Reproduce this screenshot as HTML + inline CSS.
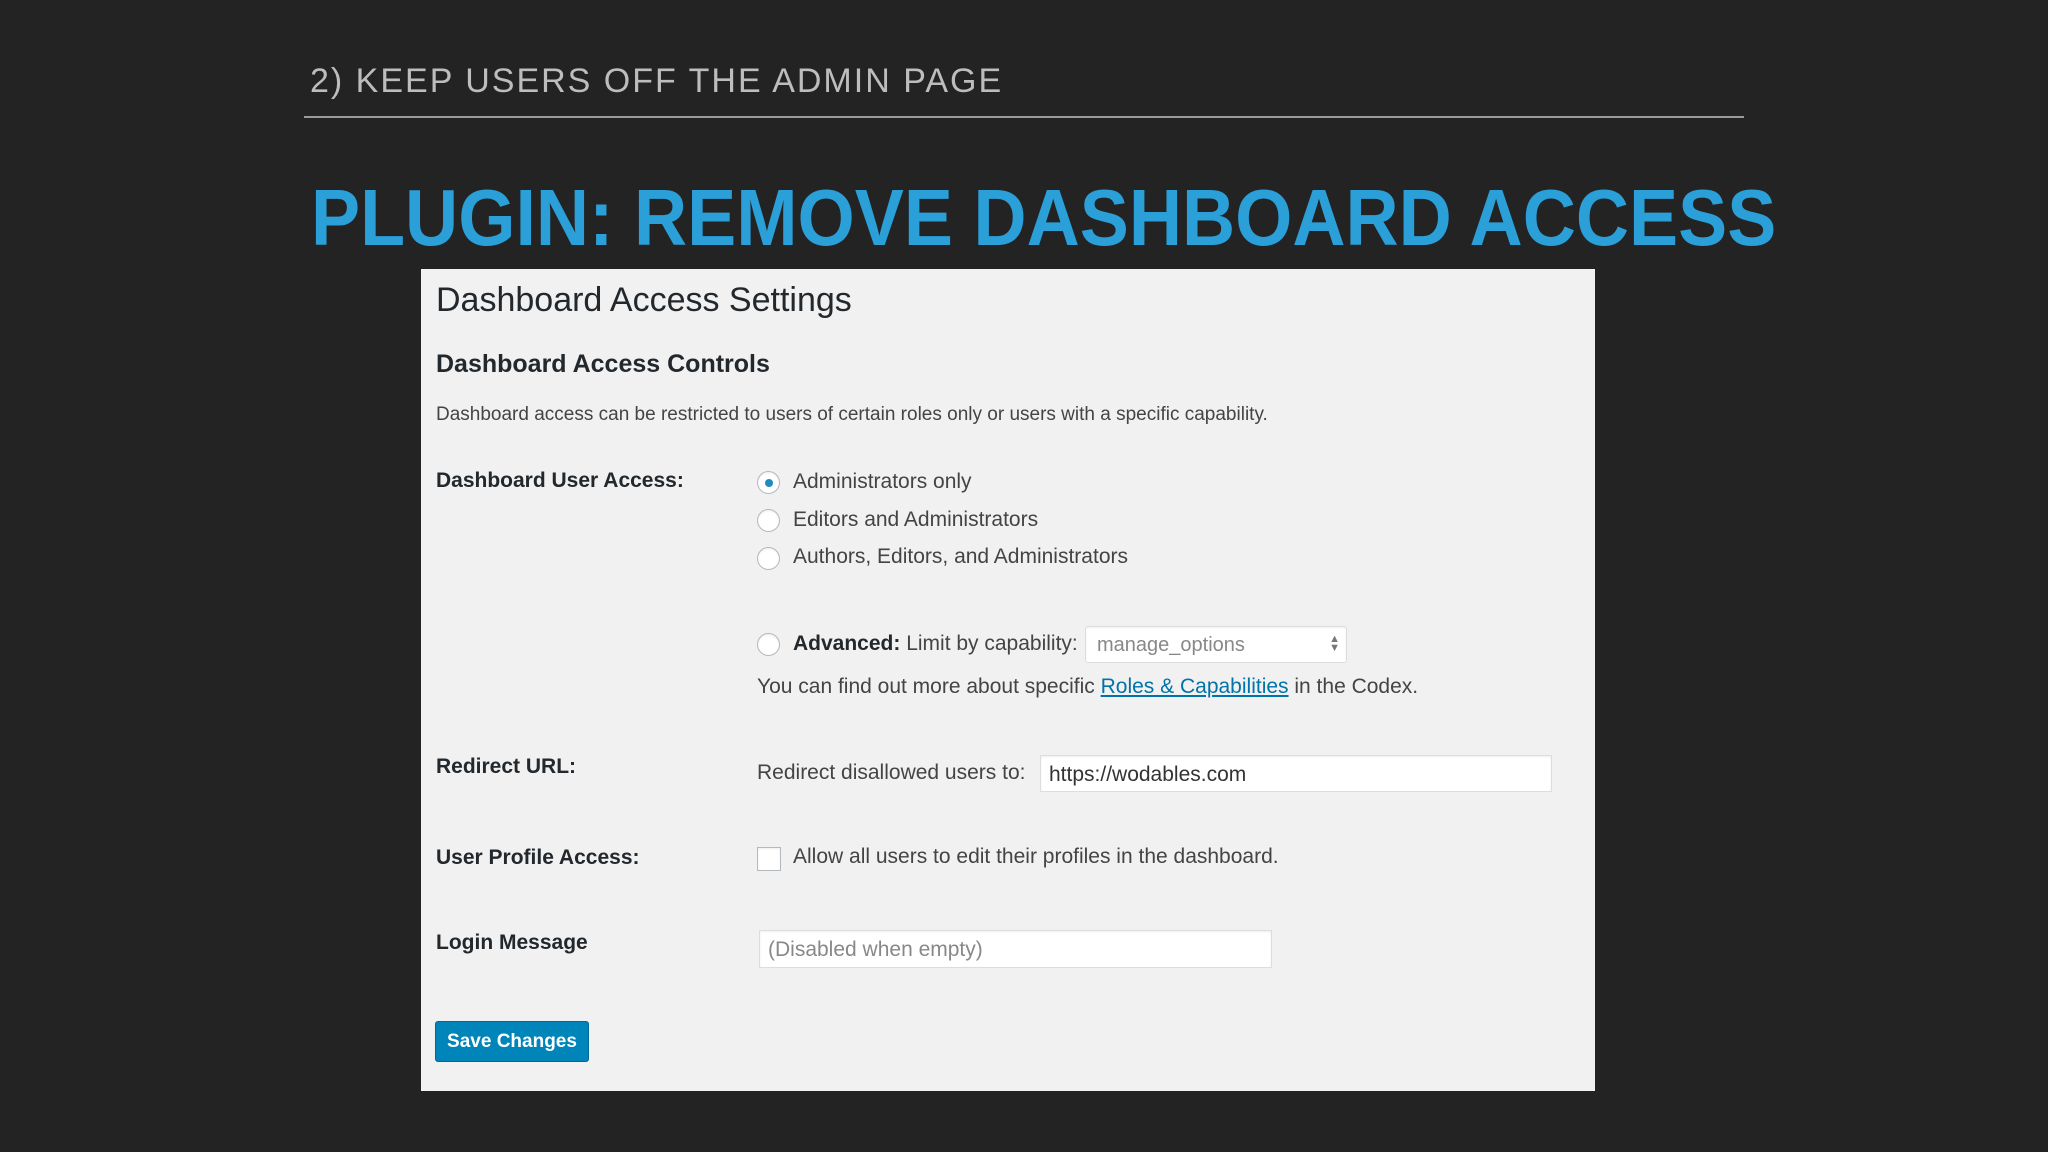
<!DOCTYPE html>
<html><head><meta charset="utf-8"><style>
*{margin:0;padding:0;box-sizing:border-box}
body{width:2048px;height:1152px;background:#232323;position:relative;overflow:hidden;font-family:"Liberation Sans",sans-serif}
.a{position:absolute;white-space:nowrap}
.sub{left:310px;top:62px;font-size:34px;letter-spacing:2px;color:#bdbdbd}
.line{left:304px;top:116px;width:1440px;height:2px;background:#9a9a9a}
.title{left:311px;top:172px;font-family:"Liberation Sans Narrow","Liberation Sans",sans-serif;font-weight:bold;font-size:80px;color:#2a9fd8;transform:scaleX(0.92);transform-origin:left}
.panel{left:421px;top:269px;width:1174px;height:822px;background:#f1f1f1;color:#333}
.p{position:absolute;white-space:nowrap}
.r{position:absolute;width:23px;height:23px;border-radius:50%;background:#fff;border:1px solid #b4b9be;box-shadow:inset 0 1px 2px rgba(0,0,0,.07)}
.in{position:absolute;background:#fff;border:1px solid #ddd;box-shadow:inset 0 1px 2px rgba(0,0,0,.07)}
.t{font-size:21px;color:#444}
.b{font-size:21px;font-weight:bold;color:#23282d}
</style></head><body>
<div class="a sub">2) KEEP USERS OFF THE ADMIN PAGE</div>
<div class="a line"></div>
<div class="a title">PLUGIN: REMOVE DASHBOARD ACCESS</div>
<div class="a panel">
<div class="p" style="left:15px;top:12px;font-size:34px;color:#23282d">Dashboard Access Settings</div>
<div class="p" style="left:15px;top:81px;font-size:25px;font-weight:bold;color:#23282d">Dashboard Access Controls</div>
<div class="p" style="left:15px;top:135px;font-size:19px;color:#444">Dashboard access can be restricted to users of certain roles only or users with a specific capability.</div>
<div class="p b" style="left:15px;top:200px">Dashboard User Access:</div>
<div class="r" style="left:336px;top:202px"><div style="position:absolute;left:7px;top:7px;width:8px;height:8px;border-radius:50%;background:#1e8cbe"></div></div>
<div class="p t" style="left:372px;top:201px">Administrators only</div>
<div class="r" style="left:336px;top:240px"></div>
<div class="p t" style="left:372px;top:239px">Editors and Administrators</div>
<div class="r" style="left:336px;top:278px"></div>
<div class="p t" style="left:372px;top:276px">Authors, Editors, and Administrators</div>
<div class="r" style="left:336px;top:364px"></div>
<div class="p t" style="left:372px;top:363px"><b style="color:#23282d">Advanced:</b> Limit by capability:</div>
<div class="in" style="left:664px;top:357px;width:262px;height:37px;border-radius:3px"><span class="p" style="left:11px;top:7px;font-size:20px;color:#888">manage_options</span><span class="p" style="right:6px;top:8px;font-size:11px;color:#777;line-height:9px">▲<br>▼</span></div>
<div class="p t" style="left:336px;top:406px">You can find out more about specific <span style="color:#0073aa;text-decoration:underline">Roles &amp; Capabilities</span> in the Codex.</div>
<div class="p b" style="left:15px;top:486px">Redirect URL:</div>
<div class="p t" style="left:336px;top:492px">Redirect disallowed users to:</div>
<div class="in" style="left:619px;top:486px;width:512px;height:37px"><span class="p" style="left:8px;top:7px;font-size:21px;color:#333">https://wodables.com</span></div>
<div class="p b" style="left:15px;top:577px">User Profile Access:</div>
<div class="in" style="left:336px;top:578px;width:24px;height:24px;border-color:#b4b9be"></div>
<div class="p t" style="left:372px;top:576px">Allow all users to edit their profiles in the dashboard.</div>
<div class="p b" style="left:15px;top:662px">Login Message</div>
<div class="in" style="left:338px;top:661px;width:513px;height:38px"><span class="p" style="left:8px;top:7px;font-size:21px;color:#888">(Disabled when empty)</span></div>
<div class="p" style="left:14px;top:752px;width:154px;height:41px;background:#0085ba;border:1px solid #006799;border-radius:3px;color:#fff;font-size:19px;font-weight:bold;text-align:center;line-height:39px">Save Changes</div>
</div>
</body></html>
